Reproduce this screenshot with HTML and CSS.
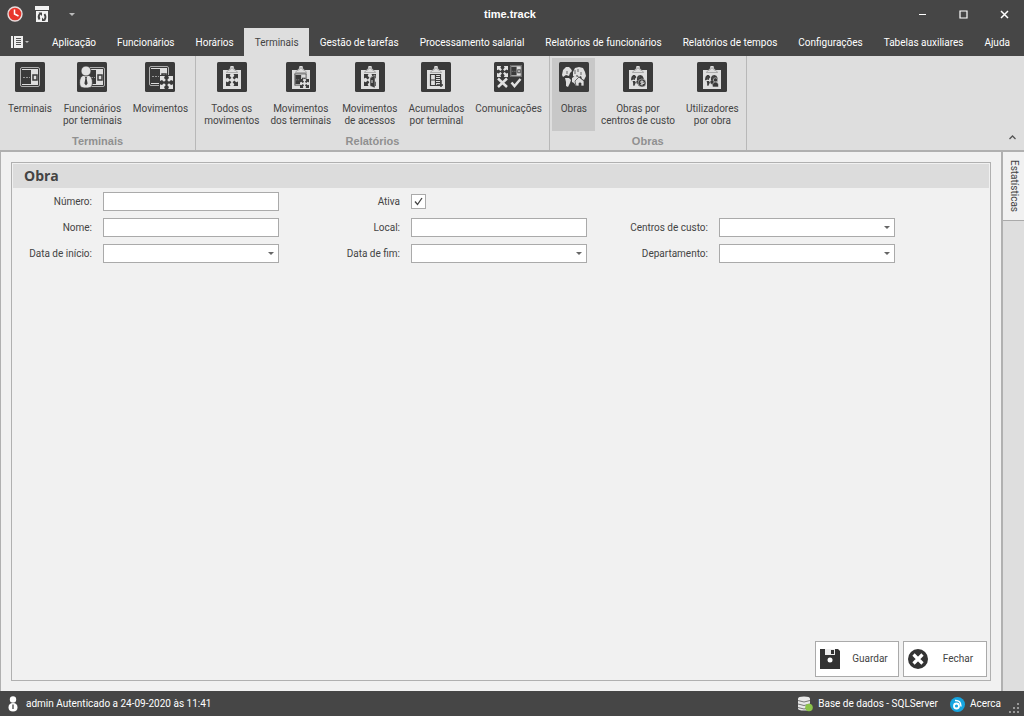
FILE: index.html
```html
<!DOCTYPE html>
<html lang="pt">
<head>
<meta charset="utf-8">
<meta name="viewport" content="width=device-width, initial-scale=1">
<title>time.track</title>
<link rel="stylesheet" href="styles.css">
</head>
<body>
<svg class="defs" aria-hidden="true">
  <symbol id="tile" viewBox="0 0 30 30"><rect width="30" height="30" rx="1.5" fill="#3a3a3a"/></symbol>
  <symbol id="device" viewBox="0 0 20 20"><rect x=".5" y=".5" width="19" height="19" rx="1.5" fill="#3a3a3a" stroke="#b0b0b0"/><rect x="2" y="2" width="16" height="16" fill="#dedede"/><rect x="2" y="3" width="9" height="14" fill="#3a3a3a"/><path d="M3 10.5h7" stroke="#999" stroke-dasharray="2 1"/><rect x="13" y="8" width="4" height="5" fill="#dedede" stroke="#3a3a3a" stroke-width="1.500"/></symbol>
  <symbol id="arrows" viewBox="0 0 12 12"><path d="M0 0h4.500L3.700 1.800 5.400 3.700 3.700 5.400 1.800 3.700 0 4.500zM12 0v4.500l-1.800-.8-1.900 1.700-1.700-1.700 1.700-1.900L7.500 0zM0 12V7.500l1.800.8 1.900-1.700 1.700 1.700-1.700 1.900.8 1.800zM12 12H7.500l.8-1.800-1.700-1.900 1.700-1.700 1.900 1.700 1.800-.8z"/></symbol>
  <symbol id="clip" viewBox="0 0 30 30"><use href="#tile"/><path d="M6 8h5q2 0 2.500-4h3q.5 4 2.500 4h5v19H6z" fill="#dedede"/><path d="M9.500 10.500q.5-2 3-2.500 1.500-.5 1.500-2h2q0 1.500 1.500 2 2.500.5 3 2.500z" fill="#dedede" stroke="#888" stroke-width=".6"/></symbol>
  <symbol id="person" viewBox="0 0 14 24"><g fill="#e2e2e2" stroke="#3a3a3a" stroke-width=".8"><path d="M.6 17.500C.6 12 3 10 7 10s6.400 2 6.400 7.500c0 5-2.400 5.500-6.400 5.500S.6 22.500.6 17.500z"/><circle cx="7" cy="6" r="5"/></g><path d="M6 12h2l-.4 1.500 1 5L7 20.500l-1.600-2 1-5z" fill="#3a3a3a"/></symbol>
  <symbol id="globe" viewBox="0 0 24 22"><path d="M0 9 1 4l3-3 3 0 2 2 1 2-2 2-1 3-3-1-3 2zM3 12l4 0 2 2-1 3-2 4-2-1v-4zM11 6l2-4 4-1 4 1 2 4 1 4-2 4-2-1-1-3-2 1-2-2-2 2-2-1zM10 12l3-2 4 1 1 4-2 3-2 2-2-3-2-1z"/><path d="M5 5v3m8-4v4m3-5v3m3 0v3" stroke="#666"/><path d="m13 15 4-4 5 4v5h-3v-3h-2v3h-3z" stroke="#3a3a3a" stroke-width=".7"/></symbol>
</svg>

<header class="titlebar">
  <div class="quick">
    <svg width="16" height="16" viewBox="0 0 16 16"><circle cx="8" cy="8" r="7" fill="#e8352b" stroke="#e9dddd" stroke-width="1.400"/><path d="M7.500 3.500V8l4 2" fill="none" stroke="#fff" stroke-width="1.500"/></svg>
    <svg width="14" height="16" viewBox="0 0 14 16"><path d="M0 0h14v4H0zM1 5h12v11H1z" fill="#f2f2f2"/><path d="M5 7.500Q2.500 10.500 4.500 13.500m5 .5Q11.500 11 9.500 8" fill="none" stroke="#444" stroke-width="1.800"/><path d="M3.500 6.500H7V10zM10.500 15H7v-3.500z" fill="#444"/></svg>
    <button class="quick-more" aria-label="Personalizar"><span class="caret"></span></button>
  </div>
  <h1 class="app-title">time.track</h1>
  <div class="window-buttons">
    <button aria-label="Minimizar"><svg width="9" height="9"><path d="M1 4.500h7" stroke="#fff"/></svg></button>
    <button aria-label="Maximizar"><svg width="9" height="9"><path d="M1 1h7v7H1z" fill="none" stroke="#fff" stroke-width="1.200"/></svg></button>
    <button aria-label="Fechar janela"><svg width="9" height="9"><path d="m1 1 7 7M8 1 1 8" stroke="#fff" stroke-width="1.500"/></svg></button>
  </div>
</header>

<nav class="tabs">
  <button class="file-menu" aria-label="Menu"><svg width="12" height="12"><path d="M0 0h2v12H0zM3 0h9v12H3z" fill="#eee"/><path d="M5 2.500h5m-5 2h5m-5 2h5m-5 2h5" stroke="#555"/></svg><span class="caret small"></span></button>
  <button class="tab">Aplicação</button>
  <button class="tab">Funcionários</button>
  <button class="tab">Horários</button>
  <button class="tab active">Terminais</button>
  <button class="tab">Gestão de tarefas</button>
  <button class="tab">Processamento salarial</button>
  <button class="tab">Relatórios de funcionários</button>
  <button class="tab">Relatórios de tempos</button>
  <button class="tab">Configurações</button>
  <button class="tab">Tabelas auxiliares</button>
  <button class="tab">Ajuda</button>
</nav>

<div class="ribbon">
  <section class="group">
    <div class="tools">
      <button class="tool"><svg class="icon" viewBox="0 0 30 30"><use href="#tile"/><use href="#device" x="5" y="5" width="20" height="20"/></svg>Terminais</button>
      <button class="tool"><svg class="icon" viewBox="0 0 30 30"><use href="#tile"/><use href="#device" x="8" y="5" width="20" height="20"/><use href="#person" x="2" y="3" width="14" height="24"/></svg>Funcionários<br>por terminais</button>
      <button class="tool"><svg class="icon" viewBox="0 0 30 30"><use href="#tile"/><use href="#device" x="4" y="4" width="20" height="20"/><path d="M14 13h15v15H14z" fill="#3a3a3a"/><use href="#arrows" x="15" y="14" width="13" height="13" fill="#e2e2e2"/></svg>Movimentos</button>
    </div>
    <h2 class="group-title">Terminais</h2>
  </section>
  <section class="group">
    <div class="tools">
      <button class="tool"><svg class="icon" viewBox="0 0 30 30"><use href="#clip"/><use href="#arrows" x="9" y="12" width="12" height="12" fill="#3a3a3a"/></svg>Todos os<br>movimentos</button>
      <button class="tool"><svg class="icon" viewBox="0 0 30 30"><use href="#clip"/><use href="#device" x="8" y="11" width="13" height="13"/><path d="M14 17h9v9h-9z" fill="#dedede"/><use href="#arrows" x="14" y="17" width="9" height="9" fill="#3a3a3a"/></svg>Movimentos<br>dos terminais</button>
      <button class="tool"><svg class="icon" viewBox="0 0 30 30"><use href="#clip"/><use href="#arrows" x="9" y="12" width="12" height="12" fill="#3a3a3a"/><path d="m15 16 5-3v13l-5-2z" fill="#3a3a3a" stroke="#dedede" stroke-width=".5"/><path d="M17 18v3" stroke="#ddd"/></svg>Movimentos<br>de acessos</button>
      <button class="tool"><svg class="icon" viewBox="0 0 30 30"><use href="#clip"/><path d="M9.500 12.500h10v11h-10zM9.500 18h10M14.500 12.500v11" fill="none" stroke="#3a3a3a" stroke-width="1.200"/><path d="M14 14h6v7h-6z" fill="#3a3a3a"/><path d="M15 15.500h4m-4 2h4m-4 2h4" stroke="#ddd"/><path d="M20 18v7m-4-2h6" stroke="#3a3a3a" stroke-width="1.500"/></svg>Acumulados<br>por terminal</button>
      <button class="tool"><svg class="icon" viewBox="0 0 30 30"><use href="#tile"/><use href="#arrows" x="3" y="4" width="11" height="11" fill="#e2e2e2"/><use href="#device" x="16" y="3" width="12" height="12"/><path d="m4 16.500 9 8.500m0-8.500L4 25m13.500-4.500 3 3.500 6-7" fill="none" stroke="#e2e2e2" stroke-width="2.500"/></svg>Comunicações</button>
    </div>
    <h2 class="group-title">Relatórios</h2>
  </section>
  <section class="group">
    <div class="tools">
      <button class="tool selected"><svg class="icon" viewBox="0 0 30 30"><use href="#tile"/><use href="#globe" x="2" y="4" width="26" height="22" fill="#dedede"/></svg>Obras</button>
      <button class="tool"><svg class="icon" viewBox="0 0 30 30"><use href="#clip"/><use href="#globe" x="8" y="12" width="13" height="13" fill="#3a3a3a"/><circle cx="19" cy="21" r="4" fill="#3a3a3a" stroke="#ddd" stroke-width=".5"/><path d="M20.500 19.500q-3-1-3 .5t3 1-3 1.500M19 18.500v5" fill="none" stroke="#eee" stroke-width=".8"/></svg>Obras por<br>centros de custo</button>
      <button class="tool"><svg class="icon" viewBox="0 0 30 30"><use href="#clip"/><use href="#globe" x="8" y="12" width="13" height="13" fill="#3a3a3a"/><circle cx="18.500" cy="18" r="2.200" fill="#3a3a3a" stroke="#ddd" stroke-width=".6"/><path d="M15.500 25q-.5-5 3-5t3 5z" fill="#3a3a3a" stroke="#ddd" stroke-width=".6"/></svg>Utilizadores<br>por obra</button>
    </div>
    <h2 class="group-title">Obras</h2>
  </section>
  <button class="collapse" aria-label="Recolher friso"><svg width="7" height="5"><path d="m.5 4 3-3 3 3" fill="none" stroke="#555" stroke-width="1.300"/></svg></button>
</div>

<div class="workspace">
  <main class="content">
    <form class="panel">
      <h2 class="panel-title">Obra</h2>
      <div class="fields">
        <label for="numero">Número:</label><input class="box" id="numero" type="text">
        <label for="ativa">Ativa</label><span class="check"><input id="ativa" type="checkbox" checked><svg width="9" height="9"><path d="m1 4.500 2.500 3L8 1" fill="none" stroke="#444" stroke-width="1.300"/></svg></span>
        <label class="first" for="nome">Nome:</label><input class="box" id="nome" type="text">
        <label for="local">Local:</label><input class="box" id="local" type="text">
        <label for="centros">Centros de custo:</label><span class="drop"><select class="box" id="centros"><option></option></select></span>
        <label class="first" for="inicio">Data de início:</label><span class="drop"><select class="box" id="inicio"><option></option></select></span>
        <label for="fim">Data de fim:</label><span class="drop"><select class="box" id="fim"><option></option></select></span>
        <label for="departamento">Departamento:</label><span class="drop"><select class="box" id="departamento"><option></option></select></span>
      </div>
      <div class="actions">
        <button class="action" type="button"><svg width="20" height="20"><path d="M0 0h18l2 2v18H0z" fill="#333"/><path d="M5 0h10v6H5z" fill="#eee"/><path d="M11 1h3v4h-3z" fill="#333"/><circle cx="10" cy="11" r="2.500" fill="#fff"/></svg><span>Guardar</span></button>
        <button class="action" type="button"><svg width="20" height="20"><circle cx="10" cy="10" r="10" fill="#333"/><path d="m5.500 5.500 9 9m0-9-9 9" stroke="#fff" stroke-width="3.200"/></svg><span>Fechar</span></button>
      </div>
    </form>
  </main>
  <aside class="side"><button class="side-tab">Estatísticas</button></aside>
</div>

<footer class="status">
  <svg width="10" height="16" viewBox="0 0 10 16"><circle cx="5" cy="3.500" r="3.200" fill="#fff"/><path d="M.5 11.500Q.5 7 5 7t4.500 4.500Q9.500 15.500 5 15.500T.5 11.500z" fill="#fff"/><path d="M5 8.500v4.500" stroke="#444" stroke-width="1.300"/></svg>
  <span class="user">admin Autenticado a 24-09-2020 às 11:41</span>
  <svg width="15" height="16" viewBox="0 0 15 16"><path d="M0 2.500Q0 .5 6 .5t6 2v10q0 2-6 2t-6-2z" fill="#e8e8e8"/><path d="M0 4.500q6 3 12 0M0 8q6 3 12 0M0 11.500q6 3 12 0" fill="none" stroke="#777"/><circle cx="11" cy="11.500" r="3.800" fill="#8bc34a"/></svg>
  <span class="database">Base de dados - SQLServer</span>
  <svg width="15" height="15" viewBox="0 0 15 15"><circle cx="7.500" cy="7.500" r="7.500" fill="#16a5e0"/><circle cx="6.500" cy="9" r="2.500" fill="none" stroke="#fff" stroke-width="1.800"/><path d="M5 3.500q6-.5 6 6" fill="none" stroke="#fff" stroke-width="1.500"/></svg>
  <span class="about">Acerca</span>
  <svg class="grip" width="10" height="10"><path d="M8 0h2v2H8zM4 4h2v2H4zM8 4h2v2H8zM0 8h2v2H0zM4 8h2v2H4zM8 8h2v2H8z" fill="#999"/></svg>
</footer>
</body>
</html>
```
FILE: styles.css
```css
* { box-sizing: border-box; }
body {
  margin: 0;
  min-height: 100vh;
  display: flex;
  flex-direction: column;
  background: #f1f1f1;
  color: #444;
  font: 10px/12px Roboto, "Liberation Sans", sans-serif;
}
button, input, select { font: inherit; color: inherit; border: 0; padding: 0; margin: 0; background: none; border-radius: 0; }
h1, h2 { margin: 0; }
svg { display: block; flex: none; }
.defs { position: absolute; width: 0; height: 0; }
.caret { border: 3px solid transparent; border-top-color: #bbb; border-bottom: 0; }
.caret.small { border-width: 2px 2px 0; }

.titlebar { display: grid; grid-template-columns: 1fr auto 1fr; align-items: center; height: 28px; padding: 0 11px 0 7px; background: #464646; color: #fff; }
.quick { display: flex; align-items: center; gap: 12px; }
.quick-more { display: flex; padding: 4px 8px; }
.app-title { font: bold 11px/12px "Liberation Sans", sans-serif; }
.window-buttons { display: flex; justify-content: flex-end; gap: 24px; }
.window-buttons button { padding: 4px; }

.tabs { display: flex; height: 28px; background: #464646; color: #fff; }
.file-menu { display: flex; flex: none; align-items: center; gap: 2px; width: 41px; padding-left: 11px; }
.tab { padding: 1px 10px 0 11px; white-space: nowrap; }
.tab.active { background: #dedede; color: #444; }

.ribbon { display: flex; min-height: 96px; background: #dedede; border-bottom: 2px solid #b0b0b0; }
.group { display: flex; flex-direction: column; padding: 2px 2px 0; border-right: 1px solid #b8b8b8; }
.tools { display: flex; }
.tool { display: flex; flex-direction: column; align-items: center; min-width: 43px; height: 73px; padding: 0 5px 0 6px; text-align: center; white-space: nowrap; }
.tool.selected { background: #c8c8c8; }
.icon { width: 30px; height: 30px; margin: 4px auto 11px; }
.group-title { margin-top: 4px; text-align: center; font: bold 11px/12px "Liberation Sans", sans-serif; color: #909090; }
.collapse { margin: auto 8px 10px auto; }

.workspace { flex: 1; display: flex; background: #dedede; }
.content { flex: 1; display: flex; padding: 10px; background: #f1f1f1; border: solid #b0b0b0; border-width: 0 2px 0 1px; }
.panel { flex: 1; display: flex; flex-direction: column; border: 1px solid #b0b0b0; padding: 1px; }
.panel-title { background: #dcdcdc; padding: 2px 11px; font: bold 14px/20px "Open Sans", sans-serif; color: #444; }
.fields { display: grid; grid-template-columns: 79px repeat(2, minmax(0, 176px) 110px) minmax(0, 176px); column-gap: 11px; row-gap: 7px; align-items: center; padding: 4px 0; }
.fields label { text-align: right; white-space: nowrap; }
.first { grid-column: 1; }
.box { display: block; width: 100%; height: 19px; background: #fff; border: 1px solid #aaa; appearance: none; padding: 0 4px; }
.check { display: grid; width: 15px; height: 15px; background: #fff; border: 1px solid #aaa; place-items: center; }
.check > * { grid-area: 1 / 1; }
.check input { appearance: none; width: 13px; height: 13px; }
.check svg { pointer-events: none; visibility: hidden; }
.check input:checked + svg { visibility: visible; }
.drop { position: relative; }
.drop::after { content: ""; position: absolute; right: 5px; top: 8px; border: 3px solid transparent; border-top-color: #666; border-bottom: 0; pointer-events: none; }
.actions { display: flex; justify-content: flex-end; gap: 4px; margin-top: auto; padding: 2px; }
.action { display: flex; align-items: center; width: 84px; height: 36px; padding: 0 4px; background: #fff; border: 1px solid #aaa; }
.action span { flex: 1; text-align: center; padding-left: 6px; }

.side { width: 21px; }
.side-tab { width: 100%; height: 69px; background: #f1f1f1; border-bottom: 1px solid #aaa; writing-mode: vertical-rl; }

.status { display: flex; align-items: center; min-height: 25px; padding: 1px 5px 0 8px; background: #464646; color: #fff; white-space: nowrap; }
.user { margin: 0 auto 0 8px; }
.database { margin: 0 12px 0 5px; }
.about { margin: 0 8px 0 5px; }
.grip { align-self: flex-end; margin-bottom: 3px; }
```
